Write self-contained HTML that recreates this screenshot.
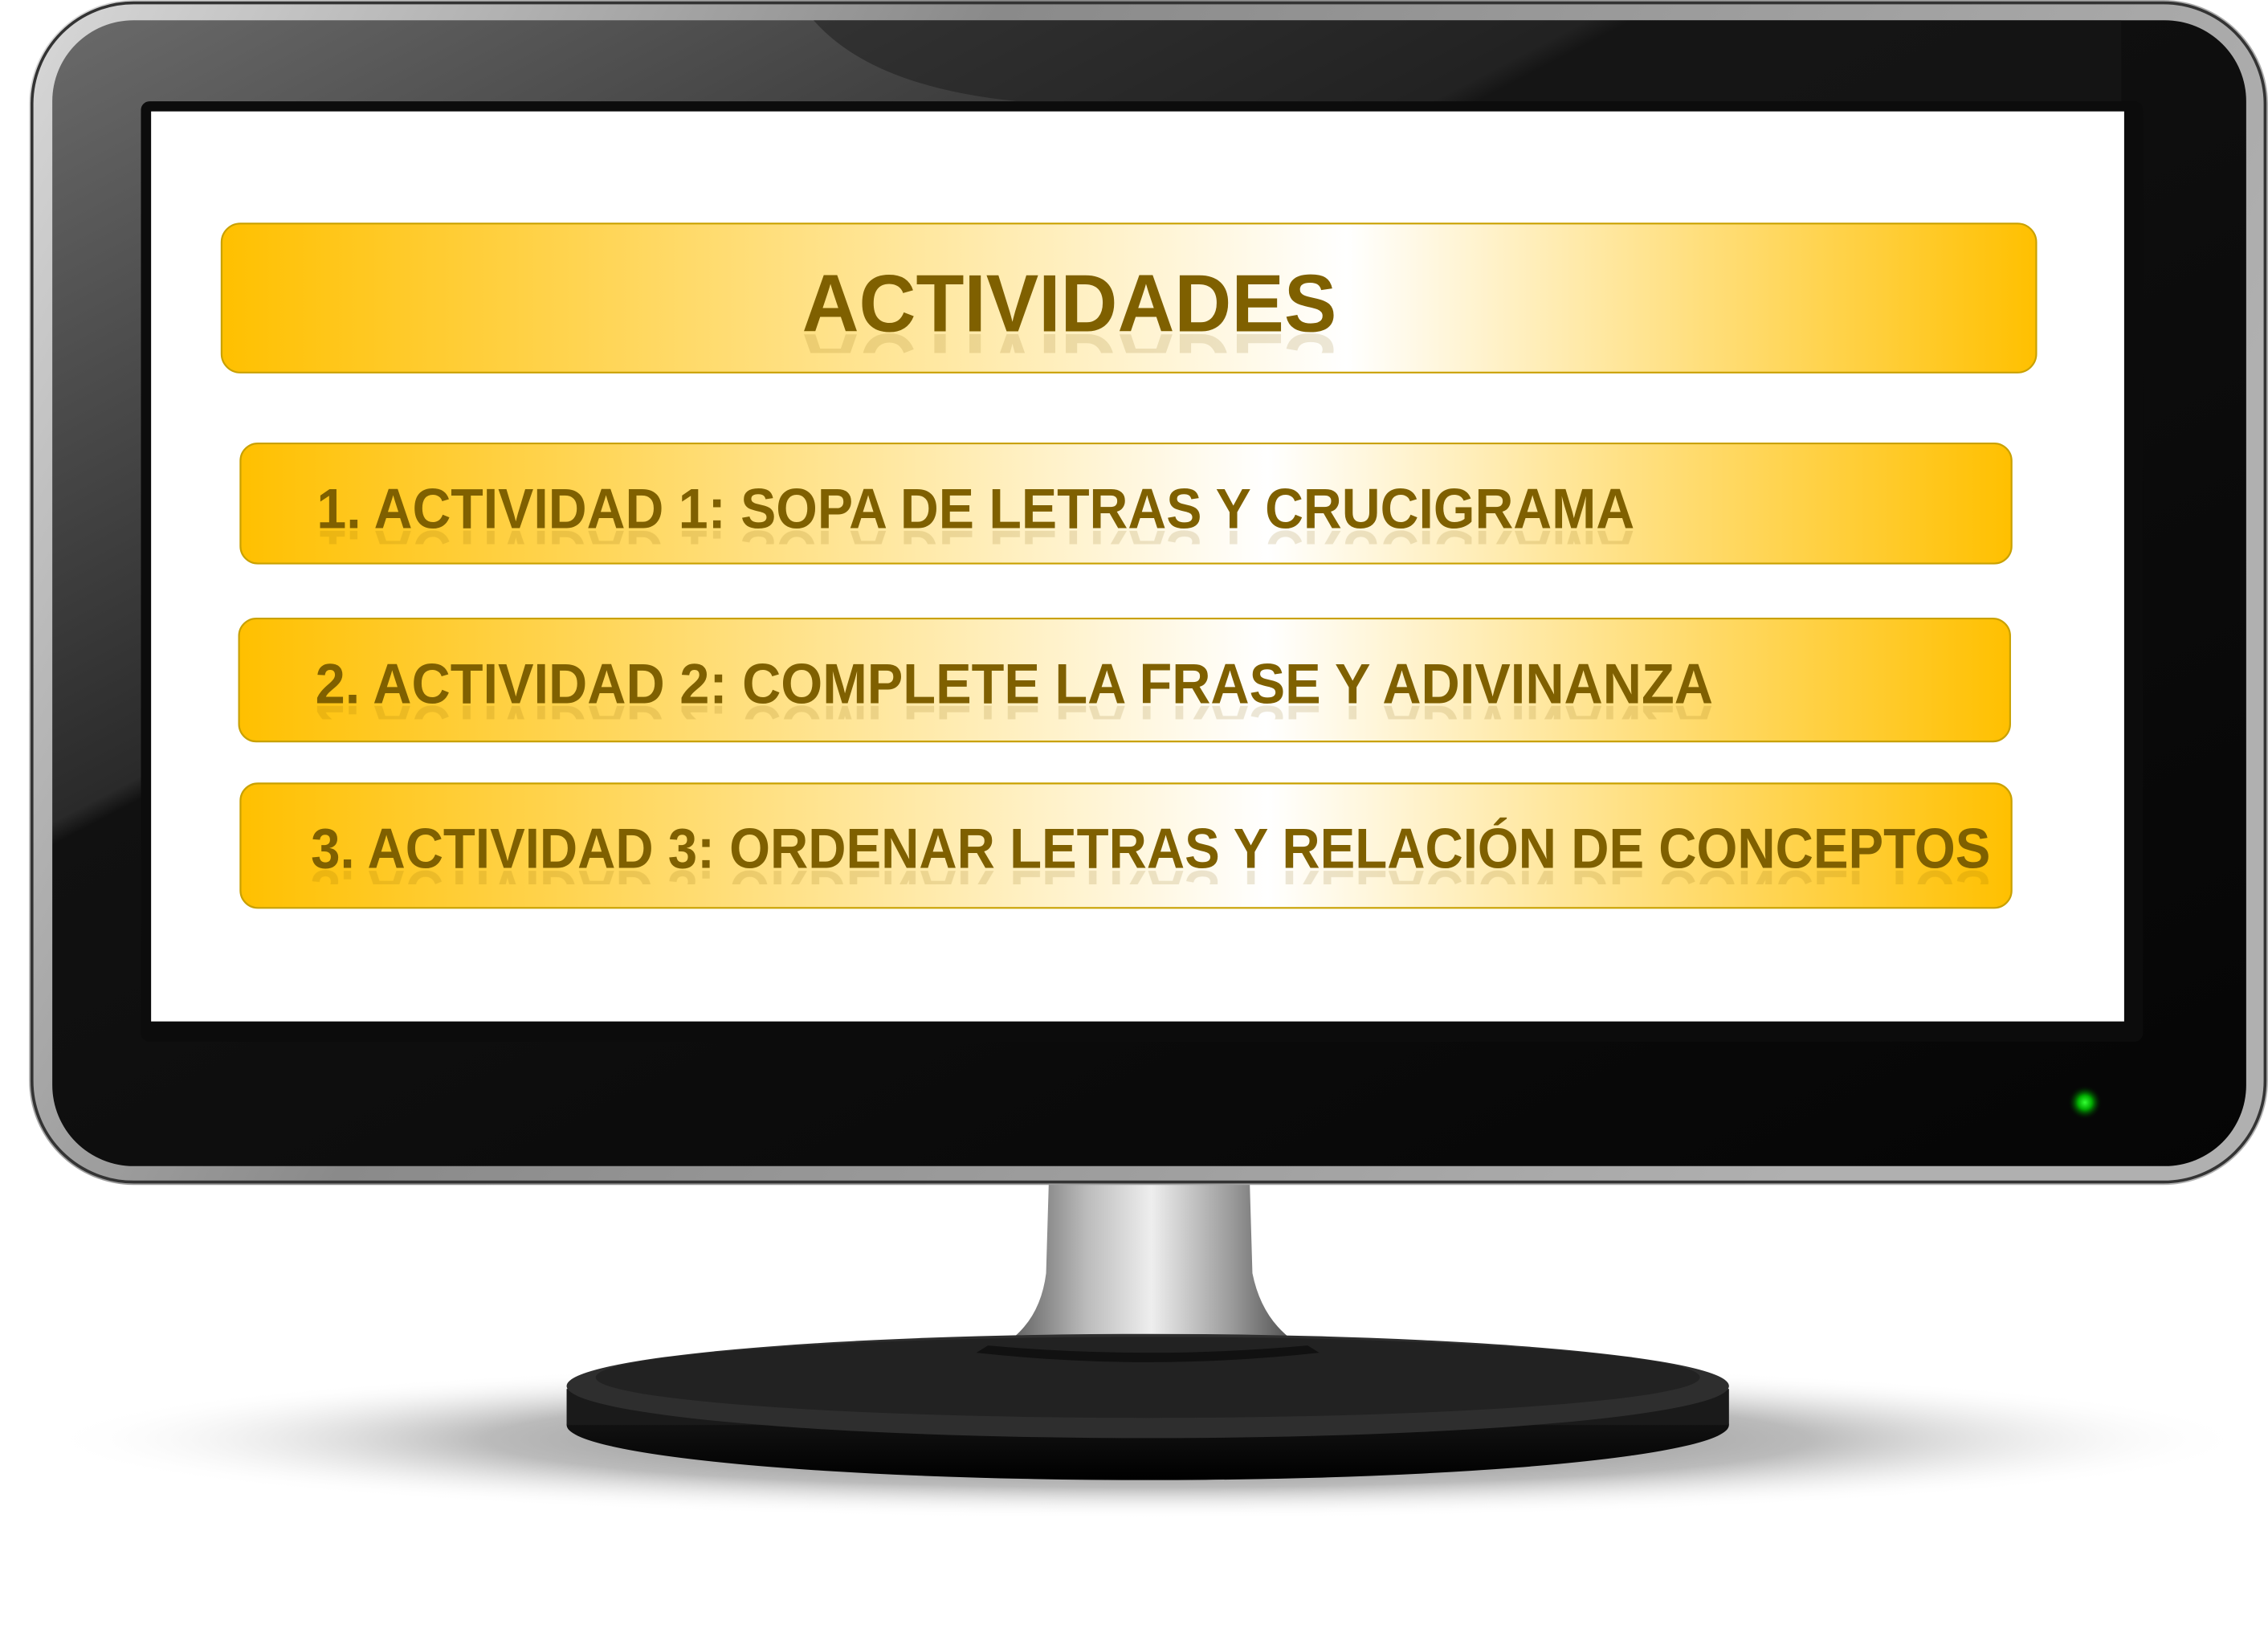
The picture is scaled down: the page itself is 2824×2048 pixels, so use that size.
<!DOCTYPE html>
<html><head><meta charset="utf-8"><style>html,body{margin:0;padding:0;background:#fff}svg{display:block}</style></head>
<body>
<svg width="2824" height="2048" viewBox="0 0 1561 1137" preserveAspectRatio="none" xmlns="http://www.w3.org/2000/svg">
<defs>
<linearGradient id="rim" x1="0" y1="0" x2="1" y2="0.3">
<stop offset="0" stop-color="#d8d8d8"/><stop offset="0.4" stop-color="#8a8a8a"/><stop offset="1" stop-color="#b0b0b0"/></linearGradient>
<linearGradient id="gloss" x1="0" y1="0" x2="1" y2="1">
<stop offset="0" stop-color="#6a6a6a"/><stop offset="0.35" stop-color="#2a2a2a"/><stop offset="0.36" stop-color="#111"/><stop offset="1" stop-color="#050505"/></linearGradient>
<linearGradient id="bar" x1="0" y1="0" x2="1" y2="0">
<stop offset="0" stop-color="#ffc000"/><stop offset="0.62" stop-color="#ffffff"/><stop offset="1" stop-color="#ffc000"/></linearGradient>
<linearGradient id="bar2" x1="0" y1="0" x2="1" y2="0">
<stop offset="0" stop-color="#ffc000"/><stop offset="0.58" stop-color="#ffffff"/><stop offset="1" stop-color="#ffc000"/></linearGradient>
<linearGradient id="neck" x1="0" y1="0" x2="1" y2="0">
<stop offset="0" stop-color="#444"/><stop offset="0.3" stop-color="#bbb"/><stop offset="0.5" stop-color="#eee"/><stop offset="0.75" stop-color="#999"/><stop offset="1" stop-color="#333"/></linearGradient>
<linearGradient id="base" x1="0" y1="0" x2="0" y2="1">
<stop offset="0" stop-color="#3a3a3a"/><stop offset="0.5" stop-color="#111"/><stop offset="1" stop-color="#000"/></linearGradient>
<radialGradient id="shadow" cx="0.5" cy="0.5" r="0.5">
<stop offset="0" stop-color="#777"/><stop offset="0.6" stop-color="#bbb"/><stop offset="1" stop-color="#fff" stop-opacity="0"/></radialGradient>
<radialGradient id="led" cx="0.5" cy="0.5" r="0.5">
<stop offset="0" stop-color="#3f3"/><stop offset="0.4" stop-color="#0a0"/><stop offset="1" stop-color="#000" stop-opacity="0"/></radialGradient>
<clipPath id="c0"><rect x="0" y="230" width="1561" height="14"/></clipPath>
<clipPath id="c1"><rect x="0" y="366" width="1561" height="10"/></clipPath>
<clipPath id="c2"><rect x="0" y="487" width="1561" height="10"/></clipPath>
<clipPath id="c3"><rect x="0" y="601" width="1561" height="10"/></clipPath>
</defs>
<ellipse cx="790" cy="995" rx="760" ry="55" fill="url(#shadow)"/>
<path d="M722 812 L860 812 L862 880 Q870 920 905 935 L680 935 Q715 920 720 880 Z" fill="url(#neck)"/>
<ellipse cx="790" cy="985" rx="400" ry="38" fill="url(#base)"/>
<rect x="390" y="960" width="800" height="25" fill="#1a1a1a"/>
<ellipse cx="790" cy="958" rx="400" ry="36" fill="#2e2e2e"/>
<ellipse cx="790" cy="952" rx="380" ry="28" fill="#222"/>
<path d="M672 935 Q790 948 908 935 L900 930 Q790 940 680 930 Z" fill="#111"/>
<rect x="20" y="0" width="1541" height="819" rx="72" fill="url(#rim)"/>
<rect x="22" y="2" width="1537" height="815" rx="70" fill="none" stroke="#333" stroke-width="2"/>
<rect x="36" y="14" width="1510" height="792" rx="56" fill="url(#gloss)"/>
<path d="M560 14 Q600 60 700 70 L1460 70 L1460 14 Z" fill="#1a1a1a" opacity="0.5"/>
<rect x="97" y="70" width="1378" height="650" rx="6" fill="#0c0c0c"/>
<rect x="104" y="77" width="1358" height="629" fill="#fff"/>
<circle cx="1435" cy="762" r="12" fill="url(#led)"/>
<rect x="152.5" y="154.5" width="1249" height="103" rx="13" fill="url(#bar)" stroke="#c9a100" stroke-width="1.2"/>
<g font-family="Liberation Sans, sans-serif" font-weight="bold" fill="#7f6000">
<text x="552" y="229" font-size="56" textLength="368" lengthAdjust="spacingAndGlyphs">ACTIVIDADES</text>
<g clip-path="url(#c0)" opacity="0.15"><text x="552" y="229" font-size="56" textLength="368" lengthAdjust="spacingAndGlyphs" transform="translate(0,460) scale(1,-1)">ACTIVIDADES</text></g>
</g>
<rect x="165.5" y="306.5" width="1219" height="83" rx="12" fill="url(#bar2)" stroke="#c9a100" stroke-width="1.2"/>
<rect x="164.5" y="427.5" width="1219" height="85" rx="12" fill="url(#bar2)" stroke="#c9a100" stroke-width="1.2"/>
<rect x="165.5" y="541.5" width="1219" height="86" rx="12" fill="url(#bar2)" stroke="#c9a100" stroke-width="1.2"/>
<g font-family="Liberation Sans, sans-serif" font-weight="bold" fill="#7f6000" font-size="39">
<text x="218" y="365" textLength="907" lengthAdjust="spacingAndGlyphs">1. ACTIVIDAD 1: SOPA DE LETRAS Y CRUCIGRAMA</text>
<text x="217" y="486" textLength="962" lengthAdjust="spacingAndGlyphs">2. ACTIVIDAD 2: COMPLETE LA FRASE Y ADIVINANZA</text>
<text x="214" y="600" textLength="1156" lengthAdjust="spacingAndGlyphs">3. ACTIVIDAD 3: ORDENAR LETRAS Y RELACIÓN DE CONCEPTOS</text>
</g>
<g font-family="Liberation Sans, sans-serif" font-weight="bold" fill="#7f6000" font-size="39" opacity="0.15">
<g clip-path="url(#c1)"><text x="218" y="365" textLength="907" lengthAdjust="spacingAndGlyphs" transform="translate(0,732) scale(1,-1)">1. ACTIVIDAD 1: SOPA DE LETRAS Y CRUCIGRAMA</text></g>
<g clip-path="url(#c2)"><text x="217" y="486" textLength="962" lengthAdjust="spacingAndGlyphs" transform="translate(0,974) scale(1,-1)">2. ACTIVIDAD 2: COMPLETE LA FRASE Y ADIVINANZA</text></g>
<g clip-path="url(#c3)"><text x="214" y="600" textLength="1156" lengthAdjust="spacingAndGlyphs" transform="translate(0,1202) scale(1,-1)">3. ACTIVIDAD 3: ORDENAR LETRAS Y RELACIÓN DE CONCEPTOS</text></g>
</g>
</svg>
</body></html>
